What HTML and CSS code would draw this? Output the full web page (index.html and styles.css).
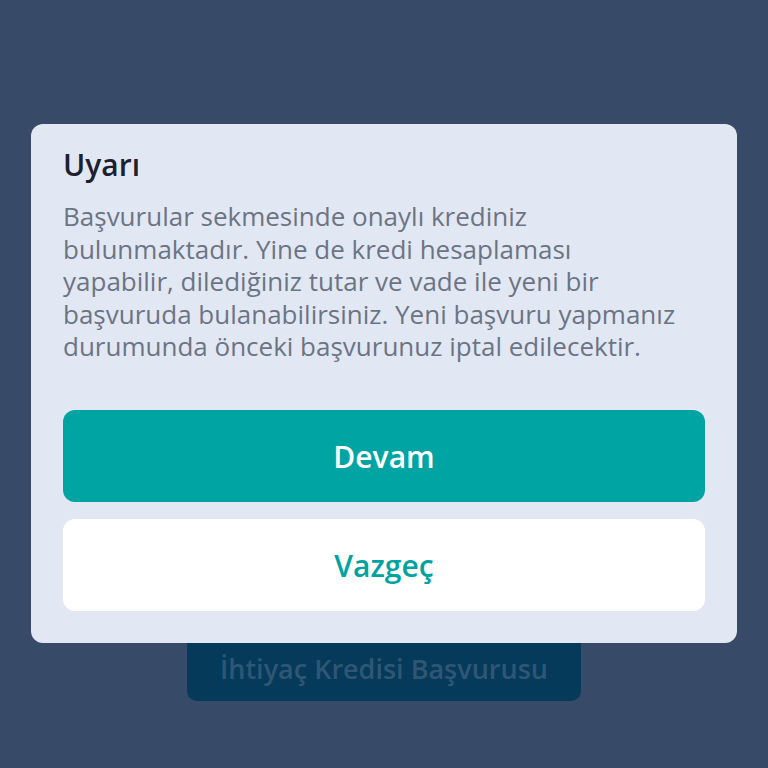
FILE: index.html
```
<!DOCTYPE html>
<html lang="tr">
<head>
<meta charset="utf-8">
<link rel="stylesheet" href="styles.css">
</head>
<body>
<div class="page">
  <div class="bg-button">İhtiyaç Kredisi Başvurusu</div>
</div>
<div class="dialog">
  <h1 class="title">Uyarı</h1>
  <p class="message">Başvurular sekmesinde onaylı krediniz<br>bulunmaktadır. Yine de kredi hesaplaması<br>yapabilir, dilediğiniz tutar ve vade ile yeni bir<br>başvuruda bulanabilirsiniz. Yeni başvuru yapmanız<br>durumunda önceki başvurunuz iptal edilecektir.</p>
  <div class="actions">
    <button class="btn btn-primary">Devam</button>
    <button class="btn btn-secondary">Vazgeç</button>
  </div>
</div>
</body>
</html>
```
FILE: styles.css
```
html, body {
  margin: 0;
  padding: 0;
  width: 768px;
  height: 768px;
  overflow: hidden;
  background: #374a68;
  font-family: "Open Sans", "Noto Sans", sans-serif;
}
.page {
  width: 768px;
  height: 768px;
  display: flex;
  flex-direction: column;
  align-items: center;
  padding-top: 605px;
  box-sizing: border-box;
}
.bg-button {
  width: 394px;
  height: 96px;
  background: #053a5a;
  border-radius: 10px;
  color: #2f5674;
  font-size: 27px;
  font-weight: 600;
  display: flex;
  align-items: flex-end;
  justify-content: center;
  padding-bottom: 14px;
  box-sizing: border-box;
}
.dialog {
  position: absolute;
  left: 31px;
  top: 124px;
  width: 706px;
  height: 519px;
  box-sizing: border-box;
  background: #e2e8f3;
  border-radius: 12px;
  padding: 19px 32px 32px 32px;
  display: flex;
  flex-direction: column;
}
.title {
  margin: 0;
  font-size: 30px;
  font-weight: 600;
  line-height: 44px;
  color: #1b2130;
}
.message {
  margin: 13px 0 0 0;
  font-size: 26px;
  line-height: 32.5px;
  color: #6c7484;
  white-space: nowrap;
}
.actions {
  margin-top: auto;
  display: flex;
  flex-direction: column;
  gap: 17px;
}
.btn {
  height: 92px;
  border: none;
  border-radius: 12px;
  font-family: inherit;
  font-size: 30px;
  font-weight: 600;
  cursor: pointer;
}
.btn-primary {
  background: #00a5a3;
  color: #ffffff;
}
.btn-secondary {
  background: #ffffff;
  color: #00a3a0;
}
```
